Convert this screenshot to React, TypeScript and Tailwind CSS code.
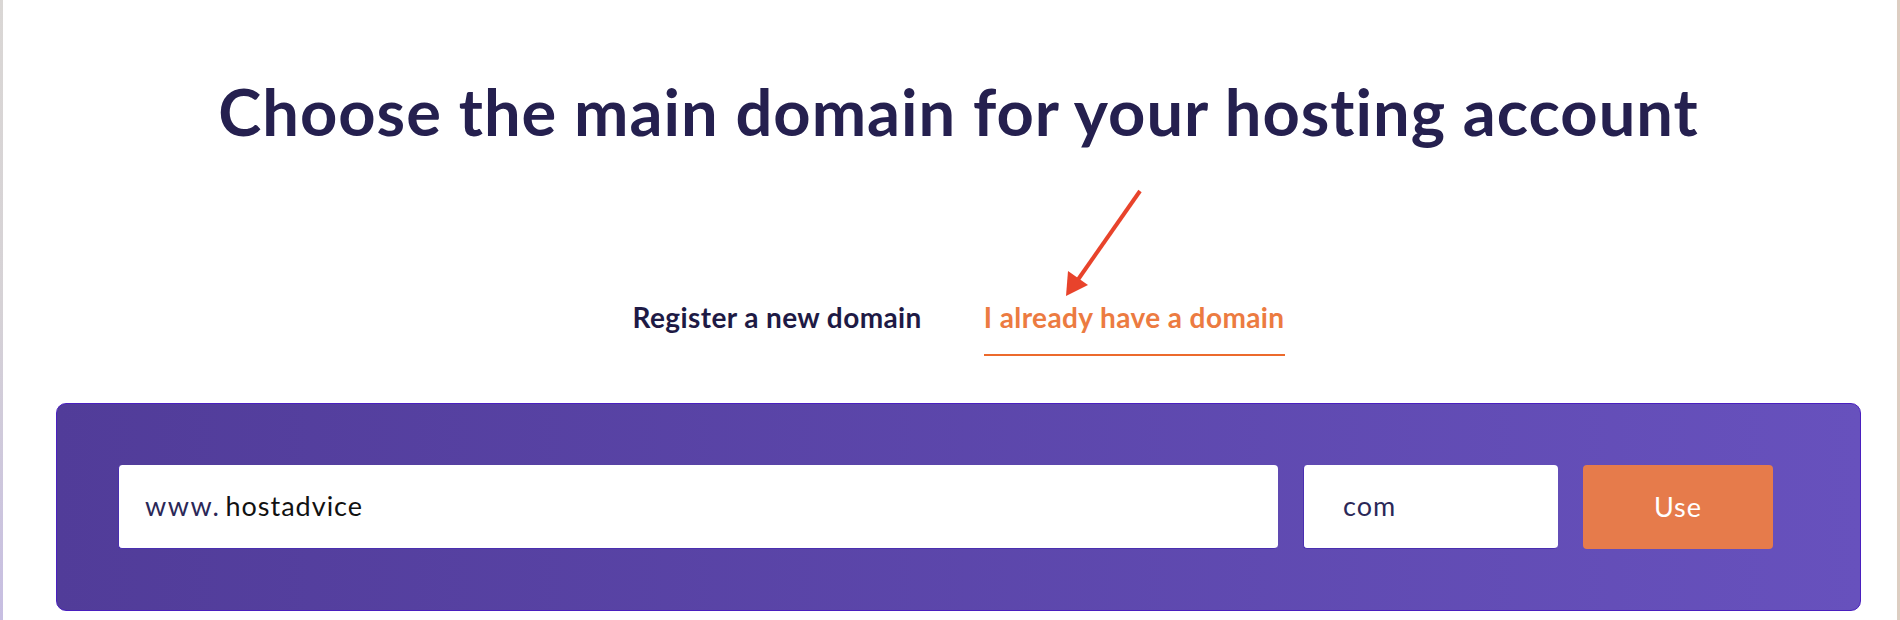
import { useState } from "react";

type Tab = "register" | "existing";

export default function App() {
  const [tab, setTab] = useState<Tab>("existing");

  return (
    <div className="relative flex h-[620px] w-full overflow-hidden bg-white font-['Lato',sans-serif]">
      {/* left window edge */}
      <div className="w-[3px] shrink-0 bg-gradient-to-b from-[#dad7d5] via-[#d6d2d6] to-[#c7bee2]" />

      <div className="flex flex-1 flex-col pl-[53px] pr-[36px]">
        <h1 className="mt-[79px] text-center text-[65px] font-bold leading-none tracking-[1px] text-[#25204f]">
          Choose the main domain for your hosting account
        </h1>

        {/* Tabs */}
        <div className="mt-[157px] flex justify-center gap-[62px]">
          <button
            onClick={() => setTab("register")}
            className={`border-b-2 pb-[21px] text-[28px] font-bold leading-[32px] tracking-[0.4px] ${
              tab === "register" ? "border-[#ec6a2c] text-[#ec7b41]" : "border-transparent text-[#1e1a45]"
            }`}
          >
            Register a new domain
          </button>
          <button
            onClick={() => setTab("existing")}
            className={`border-b-2 pb-[21px] text-[28px] font-bold leading-[32px] tracking-[0.4px] ${
              tab === "existing" ? "border-[#ec6a2c] text-[#ec7b41]" : "border-transparent text-[#1e1a45]"
            }`}
          >
            I already have a domain
          </button>
        </div>

        {/* Domain panel */}
        <div className="mt-[47px] h-[208px] rounded-[10px] border border-[#4a1fbf] bg-gradient-to-r from-[#513c99] to-[#6751bd] p-[61px]">
          <div className="flex gap-[25px]">
            <div className="flex h-[84px] w-[1160px] items-center rounded-[4px] border-b border-l border-[#4a2fb0] bg-white pl-[26px] text-[27px]">
              <span className="tracking-[1.5px] text-[#2b2858]">www.</span>
              <span className="ml-[5px] tracking-[1px] text-[#111]">hostadvice</span>
            </div>
            <div className="flex h-[84px] w-[255px] items-center rounded-[4px] border-b border-l border-[#4a2fb0] bg-white pl-[39px] text-[27px] tracking-[1px] text-[#2b2858]">
              com
            </div>
            <button className="flex h-[84px] w-[190px] items-center justify-center rounded-[4px] bg-[#e67b4b] text-[27px] tracking-[1px] text-white">
              Use
            </button>
          </div>
        </div>
      </div>

      {/* right window edge */}
      <div className="w-[3px] shrink-0 bg-[#ddcdc1]" />

      {/* annotation arrow */}
      <svg
        className="absolute left-[1058px] top-[185px]"
        width="90"
        height="115"
        viewBox="0 0 90 115"
      >
        <line x1="82" y1="6" x2="19" y2="96" stroke="#e8432b" strokeWidth="4" strokeLinecap="butt" />
        <polygon points="8,111 10,86 30,100" fill="#e8432b" />
      </svg>
    </div>
  );
}
